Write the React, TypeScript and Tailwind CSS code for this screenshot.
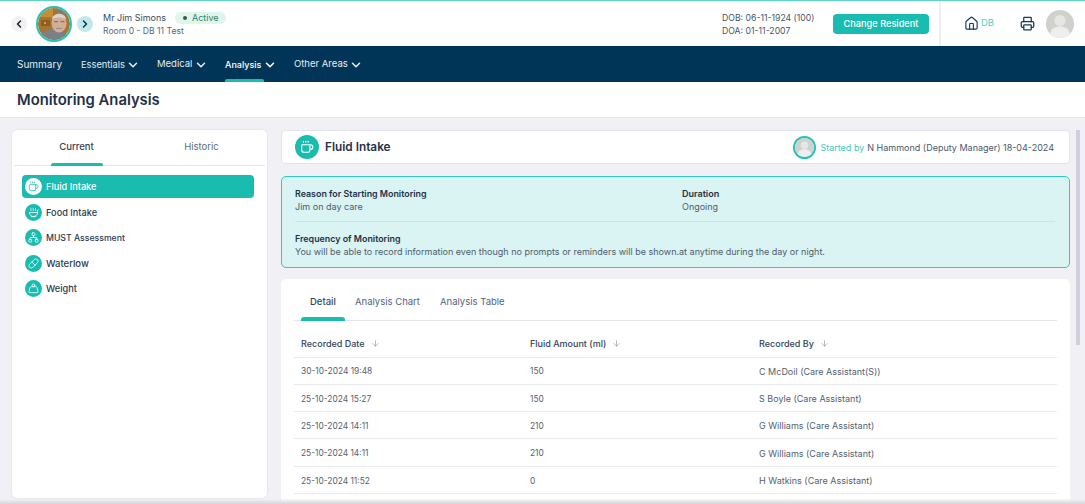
import React from "react";
import { ChevronLeft, ChevronRight, ChevronDown, Home, Printer, Coffee, Soup, Network, Pill, Weight, ArrowDown } from "lucide-react";

function Silhouette({ className }: { className: string }) {
  return (
    <svg viewBox="0 0 28 28" className={className}>
      <circle cx="14" cy="14" r="14" fill="#cfd1cd" />
      <circle cx="14" cy="10.5" r="5.6" fill="#e6e7e4" />
      <path d="M4 24c1-5.500 5-7.500 10-7.500s9 2 10 7.500a14 14 0 0 1-20 0z" fill="#eeefec" />
    </svg>
  );
}

function Photo() {
  return (
    <svg viewBox="0 0 32 32" className="w-full h-full rounded-full">
      <rect width="32" height="32" fill="#a9742c" />
      <rect x="0" y="0" width="15" height="9" fill="#c48f3c" />
      <rect x="3" y="12" width="9" height="6" fill="#8d5d22" />
      <circle cx="7" cy="15" r="1" fill="#d9b56a" />
      <rect x="18" y="0" width="14" height="8" fill="#8a7b62" />
      <path d="M1 32c1-7 5-10 12-11l9 2c4 1 8 4 10 9z" fill="#7d7f84" />
      <ellipse cx="21" cy="15" rx="7.500" ry="9.500" fill="#cfae9a" />
      <path d="M14 11c1-6 13-7 14 0-4-2-10-2-14 0z" fill="#ddd3cc" />
      <rect x="16" y="13" width="4" height="1.200" fill="#85705f" />
      <rect x="22.500" y="13" width="4" height="1.200" fill="#85705f" />
      <rect x="18" y="20" width="6" height="1" fill="#a58878" />
    </svg>
  );
}

const nav = [
  { label: "Essentials", w: "w-[44px] text-[9.300px]" },
  { label: "Medical", w: "w-[36px] text-[9.500px]" },
  { label: "Analysis", w: "w-[37px] text-[9px]", active: true },
  { label: "Other Areas", w: "w-[54px] text-[9.500px]" },
];

const side = [
  { label: "Fluid Intake", Icon: Coffee, size: "text-[9.2px]", active: true },
  { label: "Food Intake", Icon: Soup, size: "text-[9.2px]" },
  { label: "MUST Assessment", Icon: Network, size: "text-[8.7px]" },
  { label: "Waterlow", Icon: Pill, size: "text-[9.500px]" },
  { label: "Weight", Icon: Weight, size: "text-[9.2px]" },
];

const rows = [
  ["30-10-2024 19:48", "150", "C McDoil (Care Assistant(S))"],
  ["25-10-2024 15:27", "150", "S Boyle (Care Assistant)"],
  ["25-10-2024 14:11", "210", "G Williams (Care Assistant)"],
  ["25-10-2024 14:11", "210", "G Williams (Care Assistant)"],
  ["25-10-2024 11:52", "0", "H Watkins (Care Assistant)"],
];

export default function App() {
  return (
    <div className="w-[1085px] h-[504px] overflow-hidden flex flex-col bg-[#f0f0f5] text-[#44546a] font-['Inter',sans-serif] relative">
      {/* Header */}
      <header className="h-[46px] shrink-0 bg-white border-t border-[#5dd5cb] flex items-center">
        <button className="ml-[11px] w-4 h-4 rounded-full bg-[#f2f2f5] flex items-center justify-center">
          <ChevronLeft className="w-3 h-3 text-[#222]" strokeWidth={3} />
        </button>
        <div className="ml-[9px] w-9 h-9 rounded-full border-2 border-[#24c2b6] overflow-hidden">
          <Photo />
        </div>
        <button className="ml-[5px] w-4 h-4 rounded-full bg-[#c0e9e8] flex items-center justify-center">
          <ChevronRight className="w-3 h-3 text-[#0b3557]" strokeWidth={3} />
        </button>
        <div className="ml-[9px] pl-[1px] w-[620px] flex flex-col gap-[1px] pt-[1px]">
          <div className="flex items-center h-3 text-[9px] text-[#3c4a5e]">
            <span className="w-[72px]">Mr Jim Simons</span>
            <span className="h-3 w-[51px] rounded-full bg-[#e0f5ec] flex items-center pl-2 gap-[5px] text-[#2f8468]">
              <span className="w-[4px] h-[4px] rounded-full bg-[#2d5b50]" />
              Active
            </span>
          </div>
          <div className="text-[8.6px] h-3 leading-3 text-[#59677a]">Room 0 - DB 11 Test</div>
        </div>
        <div className="w-[111px] flex flex-col gap-[1px] pt-[1px] text-[8.7px] text-[#47556a]">
          <div className="h-3 leading-3 whitespace-nowrap">DOB: 06-11-1924 (100)</div>
          <div className="h-3 leading-3">DOA: 01-11-2007</div>
        </div>
        <button className="w-[96px] h-[20px] rounded-[4px] bg-[#1abcb0] text-white text-[9.200px] font-medium pt-[1px]">Change Resident</button>
        <div className="ml-[10px] w-[2px] self-stretch bg-[#eeeef3]" />
        <div className="ml-[23px] flex items-center gap-[2px] w-[56px]">
          <Home className="w-[15px] h-[15px] text-[#123a5c]" strokeWidth={1.8} />
          <span className="text-[9.500px] text-[#4fd0c6]">DB</span>
        </div>
        <Printer className="w-[15px] h-[15px] text-[#123a5c]" strokeWidth={2} />
        <Silhouette className="ml-[11px] w-[28px] h-[28px]" />
      </header>

      {/* Nav */}
      <nav className="h-9 shrink-0 bg-[#003557] flex items-stretch pl-[17px] text-[9.500px] text-[#e6edf2]">
        <span className="w-[64px] flex items-center pt-[1px] text-[10px]">Summary</span>
        {nav.map((n) => (
          <div key={n.label} className={`relative flex items-center mr-[17px] pt-[1px] ${n.active ? "text-white font-medium" : ""}`}>
            <span className={`whitespace-nowrap ${n.w}`}>{n.label}</span>
            <ChevronDown className="ml-[1px] w-[14px] h-[14px]" strokeWidth={2.6} />
            {n.active && <span className="absolute left-0 bottom-0 w-[39px] h-[3px] bg-[#1abcb0] rounded-t-[2px]" />}
          </div>
        ))}
      </nav>

      {/* Title */}
      <div className="h-9 shrink-0 bg-white border-b border-[#e6e6ee] pl-[17px] pt-[1px] flex items-center text-[14.800px] font-semibold text-[#1f3147]">
        Monitoring Analysis
      </div>

      {/* Body */}
      <div className="flex-1 min-h-0 flex items-start pl-3 pt-3 gap-[14px]">
        <aside className="w-[255px] h-[368px] shrink-0 bg-white rounded-[5px] shadow-[0_0_2px_rgba(60,60,90,0.15)] px-[2px]">
          <div className="flex h-[36px] border-b-[1.500px] border-[#e3e4ec] text-[9.500px] font-medium">
            <div className="relative w-[125px] flex items-center justify-center text-[#33435a] pb-[1px]">
              Current
              <span className="absolute left-[37px] bottom-[-1px] w-[52px] h-[3px] rounded-t-[2px] bg-[#1abcb0]" />
            </div>
            <div className="w-[125px] flex items-center justify-center font-normal text-[#606c7c] pb-[1px]">Historic</div>
          </div>
          <ul className="mt-[9px] ml-2 mr-[11px] flex flex-col gap-[2.600px]">
            {side.map(({ label, Icon, active, size }) => (
              <li key={label} className={`h-[23px] flex items-center pl-[3px] gap-1 rounded-[4px] font-medium ${size} ${active ? "bg-[#1abcb0] text-white" : "text-[#2c3a4c]"}`}>
                <span className={`w-[17px] h-[17px] rounded-full flex items-center justify-center ${active ? "bg-white text-[#1abcb0]" : "bg-[#1abcb0] text-white"}`}>
                  <Icon className="w-[11px] h-[11px]" strokeWidth={1.7} />
                </span>
                <span className="pt-[1px]">{label}</span>
              </li>
            ))}
          </ul>
        </aside>

        <main className="w-[789px] shrink-0 flex flex-col">
          <div className="h-[34px] bg-white rounded-[4px] border border-[#e3e3ed] flex items-center pl-[13px] pr-[15px]">
            <span className="w-6 h-6 rounded-full bg-[#1abcb0] flex items-center justify-center text-white">
              <Coffee className="w-[14px] h-[14px]" strokeWidth={1.8} />
            </span>
            <span className="ml-[6px] pt-[1px] text-[11.800px] font-semibold text-[#1f3147]">Fluid Intake</span>
            <div className="ml-auto flex items-center text-[9px]">
              <span className="w-[23px] h-[23px] rounded-full border-2 border-[#24c2b6] overflow-hidden mr-1">
                <Silhouette className="w-full h-full" />
              </span>
              <span className="text-[#45c9bd] pt-[1px]">Started by</span>
              <span className="ml-[3px] pt-[1px] text-[#4b586b]">N Hammond (Deputy Manager) 18-04-2024</span>
            </div>
          </div>

          <section className="mt-3 h-[92px] rounded-[5px] border border-[#2dcabd] bg-[#daf3f3] px-[13px] pt-[10px] text-[9px]">
            <div className="flex h-[26px] leading-[13px]">
              <div className="w-[387px]">
                <div className="font-semibold text-[8.900px] text-[#1f3147]">Reason for Starting Monitoring</div>
                <div className="text-[#4f5d6e]">Jim on day care</div>
              </div>
              <div>
                <div className="font-semibold text-[#1f3147]">Duration</div>
                <div className="text-[#4f5d6e]">Ongoing</div>
              </div>
            </div>
            <div className="mt-[8px] border-t border-[#cfe2e4] pt-[10px] leading-[13px] mr-[1px]">
              <div className="font-semibold text-[8.900px] text-[#1f3147]">Frequency of Monitoring</div>
              <div className="text-[#4f5d6e] whitespace-nowrap">You will be able to record information even though no prompts or reminders will be shown.at anytime during the day or night.</div>
            </div>
          </section>

          <section className="mt-[11px] h-[240px] rounded-t-[5px] bg-white px-[13px] pt-[1px]">
            <div className="flex h-[41px] border-b-[1.500px] border-[#e3e4ec] text-[9.500px] text-[#55637a] pt-[5px]">
              <div className="relative w-[51px] flex items-center pl-[16px] font-medium text-[#33435a]">
                Detail
                <span className="absolute left-[7px] bottom-[-1px] w-[44px] h-[4px] rounded-t-[3px] bg-[#1abcb0]" />
              </div>
              <div className="ml-[10px] w-[66px] flex items-center whitespace-nowrap">Analysis Chart</div>
              <div className="ml-[19px] flex items-center">Analysis Table</div>
            </div>
            <table className="w-[763px] table-fixed text-[9px] text-[#55606f] border-collapse">
              <thead>
                <tr className="h-[36px] border-b border-[#e9e9f0] text-left text-[#33435a]">
                  {["Recorded Date", "Fluid Amount (ml)", "Recorded By"].map((h, i) => (
                    <th key={h} className={`font-medium pl-[7px] pt-[9px] ${i === 2 ? "w-[305px]" : "w-[229px]"}`}>
                      <span className="inline-flex items-center gap-[6px]">
                        {h}
                        <ArrowDown className="w-[9px] h-[9px] text-[#8e98a3]" strokeWidth={1.8} />
                      </span>
                    </th>
                  ))}
                </tr>
              </thead>
              <tbody>
                {rows.map((r, i) => (
                  <tr key={i} className="h-[27.300px] border-b border-[#e9e9f0]">
                    {r.map((c, j) => (
                      <td key={j} className={`pl-[7px] pt-[2px] ${j < 2 ? "text-[8.400px]" : ""}`}>{c}</td>
                    ))}
                  </tr>
                ))}
              </tbody>
            </table>
          </section>
        </main>

        <div className="ml-[-8px] w-[4px] h-[215px] shrink-0 bg-[#d0d0dc]" />
      </div>
      <div className="absolute left-0 right-0 bottom-0 h-[5px] bg-gradient-to-b from-[#f3f3f6]/70 to-[#d5d5da]" />
    </div>
  );
}
